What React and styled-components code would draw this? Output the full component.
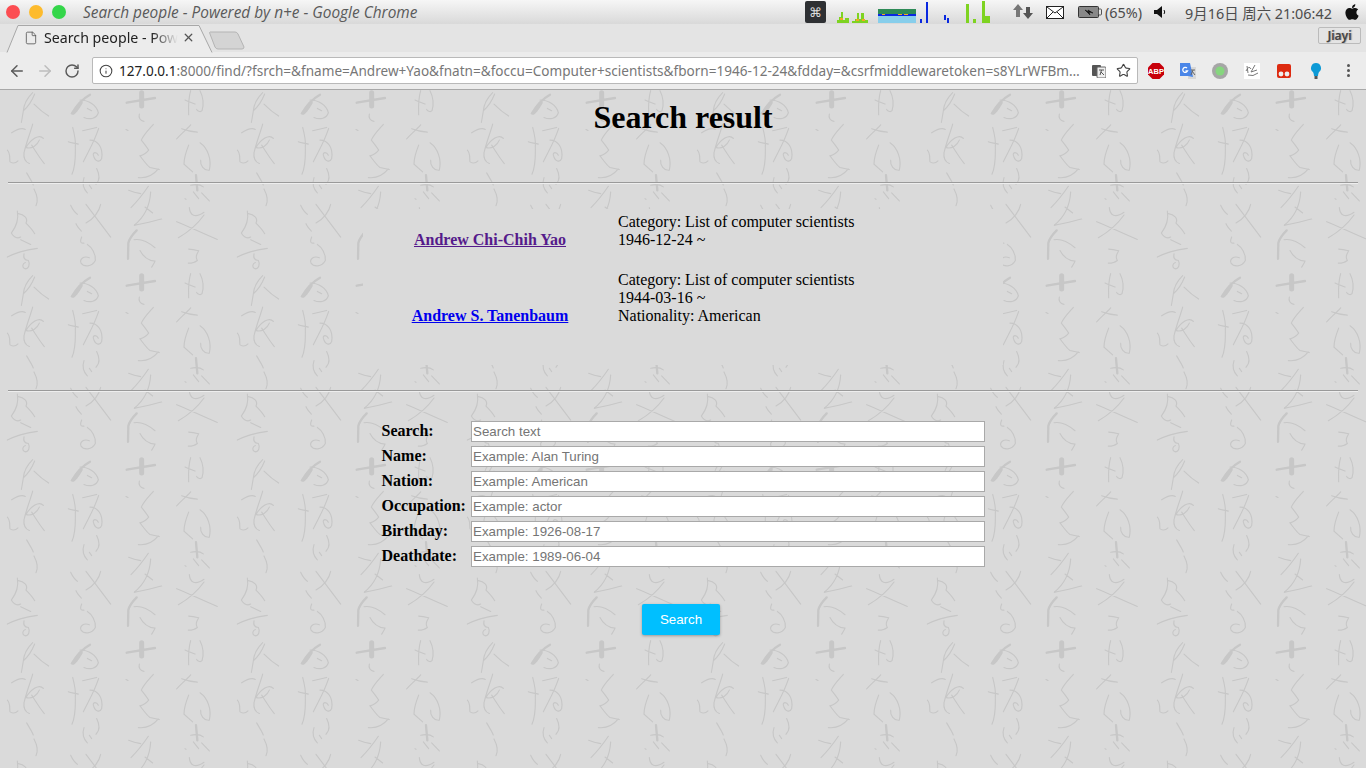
import React from "react";
import styled, { createGlobalStyle } from "styled-components";
import { ArrowLeft, ArrowRight, RotateCw, Star, X, File, Info } from "lucide-react";
import { FaApple } from "react-icons/fa";

// calligraphy strokes of the page wallpaper, in a 690x550 space (one tile is 230x183.5 on the page)
const thin = [
  "M98 8C88 18 72 40 70 62C82 52 96 32 104 12", "M70 62C68 75 66 88 64 97", "M102 42C115 55 130 68 146 78",
  "M35 128C50 118 65 112 76 118", "M98 102C92 125 78 160 72 188C70 205 76 215 88 220", "M130 145C118 130 92 148 78 172C95 178 112 165 118 150", "M95 165C108 185 120 205 133 220",
  "M22 180C32 190 28 205 30 215C38 220 48 218 54 212", "M80 248C88 262 95 272 100 284", "M102 296C112 315 116 330 108 346",
  "M52 362C56 385 48 410 34 428C42 442 52 445 62 440", "M55 370C72 372 85 385 78 398C88 408 98 418 104 430", "M62 448L92 462", "M22 500C50 485 85 478 112 474",
  "M72 490C70 500 72 510 85 510", "M85 510C92 522 85 535 75 535C66 532 66 520 76 516",
  "M240 30C265 30 290 45 295 68C290 85 270 90 252 82", "M262 55L275 62", "M218 112C224 135 228 150 226 170C226 200 228 225 216 252", "M205 155C215 160 225 158 235 162",
  "M248 122L290 112", "M296 115C285 150 270 175 250 215", "M270 150C295 150 310 175 305 205C300 218 285 215 280 195C278 185 290 185 295 195",
  "M290 235C300 255 298 272 288 282", "M252 262C246 280 250 295 262 308", "M268 285L275 295", "M212 345C218 358 222 365 232 372", "M258 342L332 440", "M302 342C298 362 282 385 258 398", "M228 400C232 410 238 415 244 422",
  "M245 440C240 452 240 460 252 458", "M262 462C275 470 288 490 286 510C275 530 252 530 243 518C238 505 252 495 268 502",
  "M418 72C415 82 420 92 432 94", "M378 118L384 121", "M460 103C445 120 430 135 424 150C432 160 440 170 446 180C438 190 428 195 420 197C430 210 440 225 450 232L478 238", "M415 262C445 265 462 252 475 236",
  "M445 288C430 310 410 335 393 352", "M386 300C398 305 410 308 422 310", "M452 305C450 340 440 375 402 405C430 400 460 392 485 386", "M435 350L458 368",
  "M402 448C420 445 445 455 465 472", "M420 480C430 500 445 510 465 512C462 520 458 525 455 530",
  "M572 2C565 25 565 50 566 74", "M555 30C565 35 575 38 585 42", "M600 2C610 20 612 45 606 62C600 68 592 62 590 58",
  "M530 146C545 130 560 118 572 104", "M545 116C560 122 575 125 592 126", "M566 165C558 185 552 205 552 222L578 245", "M600 158C625 175 635 210 628 240C612 242 600 225 602 210",
  "M572 285C585 282 598 280 610 290", "M605 308L628 332", "M555 325L558 327", "M580 305L596 325",
  "M568 352C570 375 585 385 612 366", "M530 394C570 410 610 430 652 447", "M612 374C590 405 565 425 535 442", "M566 476C575 476 585 478 596 481C590 492 585 500 592 510C585 516 575 518 565 518"
];
const thick = [
  "M270 14C250 25 228 48 216 70C222 75 235 55 245 38", "M380 38L465 24", "M410 420C398 432 388 445 385 458L384 505", "M588 255L592 300"
];
const tile = `<svg xmlns="http://www.w3.org/2000/svg" viewBox="0 0 690 550.5"><defs><filter id="s"><feGaussianBlur stdDeviation="0.9"/></filter></defs><g fill="none" stroke="#c7c7c7" stroke-linecap="round" filter="url(#s)"><path stroke-width="3.4" d="${thin.join("")}"/><path stroke-width="7" d="${thick.join("")}"/><path stroke-width="15" d="M425 8L425 48"/></g></svg>`;
const tileUrl = `data:image/svg+xml,${encodeURIComponent(tile)}`;

const results = [
  { name: "Andrew Chi-Chih Yao", visited: true, lines: ["Category: List of computer scientists", "1946-12-24 ~"] },
  { name: "Andrew S. Tanenbaum", visited: false, lines: ["Category: List of computer scientists", "1944-03-16 ~", "Nationality: American"] }
];

const fields = [
  { label: "Search:", hint: "Search text" },
  { label: "Name:", hint: "Example: Alan Turing" },
  { label: "Nation:", hint: "Example: American" },
  { label: "Occupation:", hint: "Example: actor" },
  { label: "Birthday:", hint: "Example: 1926-08-17" },
  { label: "Deathdate:", hint: "Example: 1989-06-04" }
];

function NetGraphs() {
  return (
    <svg width="158" height="24" viewBox="0 0 158 24">
      <path fill="#7ed321" d="M2 23V20H4V17H6V12H8V20H10V18H14V23ZM17 23V21H20V19H22V13H24V19H26V13H29V20H33V23ZM131 23V4H134V23ZM147 23V1H150V23ZM150 23V16H155V23ZM138 23V19H141V23Z" />
      <path fill="#f5a623" d="M5 18H8V20H5ZM21 19H24V21H21ZM27 19H30V21H27Z" />
      <rect x="43" y="9" width="38" height="5" fill="#2e8b57" />
      <rect x="43" y="14" width="38" height="2" fill="#0a28e0" />
      <rect x="43" y="16" width="38" height="7" fill="#87ceeb" />
      <path fill="#f5a623" d="M47 14H50V15H47ZM63 14H67V15H63ZM69 14H73V15H69Z" />
      <path fill="#0a28e0" d="M85 19H87V23H85ZM91 2H93V23H91ZM109 15H111V20H109ZM112 18H114V23H112Z" />
    </svg>
  );
}

function Battery() {
  return (
    <svg width="25" height="14" viewBox="0 0 25 14">
      <rect x="0.5" y="1.5" width="20" height="11" rx="1" fill="#888" stroke="#333" />
      <rect x="20.5" y="4" width="3" height="6" rx="1" fill="none" stroke="#555" />
      <path d="M7 5L11 7L10 5L15 8L11 7L12 10Z" fill="#111" stroke="#111" strokeWidth=".6" />
    </svg>
  );
}

function ExtensionIcons() {
  return (
    <ExtensionRow>
      <svg width="18" height="18" viewBox="0 0 18 18">
        <path d="M5.500 1H12.500L17 5.500V12.500L12.500 17H5.500L1 12.500V5.500Z" fill="#c8000a" />
        <Abp x="9" y="11.800" textAnchor="middle">ABP</Abp>
      </svg>
      <svg width="18" height="18" viewBox="0 0 18 18">
        <path d="M9 5H17V17H9Z" fill="#d8d8d8" />
        <path d="M1 1H11L14 15L9 14H1Z" fill="#4a86e8" />
        <path d="M12 8H16M14 8L12 13M13 9L16 13" stroke="#666" fill="none" />
        <path d="M8 6A2.500 2.500 0 1 0 8.500 9H6.500" stroke="#fff" strokeWidth="1.3" fill="none" />
      </svg>
      <svg width="18" height="18" viewBox="0 0 18 18">
        <circle cx="9" cy="9" r="8" fill="#a6a6a6" />
        <circle cx="9" cy="9" r="4.500" fill="#86d67e" />
      </svg>
      <svg width="18" height="18" viewBox="0 0 18 18">
        <rect width="16" height="16" x="1" y="1" fill="#fff" />
        <path d="M3 9Q6 3 8 7M12 3L8 10L14 8M5 13Q10 15 15 11M4 4L5 11" stroke="#777" fill="none" />
      </svg>
      <svg width="18" height="18" viewBox="0 0 18 18">
        <rect x="2" y="2" width="14" height="14" rx="2" fill="#dd2a10" />
        <circle cx="6" cy="12" r="2.400" fill="#eee" />
        <circle cx="12" cy="12" r="2.400" fill="#eee" />
      </svg>
      <svg width="18" height="18" viewBox="0 0 18 18">
        <path d="M9 1A5 5 0 0 1 12 10Q11 12 11 14H7Q7 12 6 10A5 5 0 0 1 9 1Z" fill="#0d9ad6" />
        <rect x="7.500" y="14" width="3" height="3" fill="#555" />
      </svg>
      <MenuDots>
        <i />
        <i />
        <i />
      </MenuDots>
    </ExtensionRow>
  );
}

export default function App() {
  return (
    <Screen>
      <GlobalStyle />
      <TitleBar>
        <Lights>
          <Light $color="#fc4d52" />
          <Light $color="#fdbb2d" />
          <Light $color="#34d64a" />
        </Lights>
        <WindowTitle>Search people - Powered by n+e - Google Chrome</WindowTitle>
        <Tray>
          <CmdKey>⌘</CmdKey>
          <TraySlot $gap={9}>
            <NetGraphs />
          </TraySlot>
          <TraySlot $gap={20}>
            <svg width="20" height="18" viewBox="0 0 20 18">
              <path d="M5 1L10 7H7V14H3V7H0Z" fill="#777" />
              <path d="M15 16L20 10H17V4H13V10H10Z" fill="#555" />
            </svg>
          </TraySlot>
          <TraySlot $gap={13}>
            <svg width="18" height="13" viewBox="0 0 18 13">
              <rect x=".5" y=".5" width="17" height="12" fill="#fff" stroke="#222" />
              <path d="M1 1L9 7L17 1M1 12L7 6M17 12L11 6" fill="none" stroke="#222" />
            </svg>
          </TraySlot>
          <TraySlot $gap={14}>
            <Battery />
          </TraySlot>
          <TrayText $gap={2}>(65%)</TrayText>
          <TraySlot $gap={12}>
            <svg width="12" height="12" viewBox="0 0 12 12">
              <path d="M0 4H3L8 0V12L3 8H0Z" fill="#111" />
              <path d="M10 4Q11.500 6 10 8" stroke="#111" fill="none" />
            </svg>
          </TraySlot>
          <TrayText $gap={19}>9月16日 周六 21:06:42</TrayText>
          <AppleSlot>
            <FaApple size={18} />
          </AppleSlot>
        </Tray>
      </TitleBar>

      <TabStrip>
        <Tab>
          <TabShape viewBox="0 0 213 28" preserveAspectRatio="none">
            <path d="M7 27.500L18 .5H199L212 27.500" fill="#ececec" stroke="#a8a8a8" />
          </TabShape>
          <File size={14} strokeWidth={1.4} color="#555" />
          <TabTitle>Search people - Pow</TabTitle>
          <X size={13} strokeWidth={2.4} color="#555" />
        </Tab>
        <NewTab viewBox="0 0 36 19">
          <path d="M1 1H26Q28 1 29 3L35 16Q35 18 33 18H9Q7 18 6 16L1 3Q0 1 1 1Z" fill="#d4d4d4" stroke="#b4b4b4" />
        </NewTab>
        <ProfileButton>Jiayi</ProfileButton>
      </TabStrip>

      <Toolbar>
        <NavIcons>
          <ArrowLeft size={18} color="#5a5a5a" strokeWidth={2} />
          <ArrowRight size={18} color="#bdbdbd" strokeWidth={2} />
          <RotateCw size={16} color="#5a5a5a" strokeWidth={2.2} />
        </NavIcons>
        <Omnibox>
          <Info size={14} color="#444" strokeWidth={1.8} />
          <Url>
            <UrlHost>127.0.0.1</UrlHost>:8000/find/?fsrch=&amp;fname=Andrew+Yao&amp;fnatn=&amp;foccu=Computer+scientists&amp;fborn=1946-12-24&amp;fdday=&amp;csrfmiddlewaretoken=s8YLrWFBm…
          </Url>
          <svg width="14" height="14" viewBox="0 0 14 14">
            <rect x="0" y="1" width="9" height="11" rx="1" fill="#555" />
            <rect x="5" y="3" width="9" height="11" rx="1" fill="#eee" stroke="#666" />
            <path d="M7 6H12M9.500 6L8 11M9 8L12 11" stroke="#555" fill="none" />
          </svg>
          <Star size={15} color="#444" strokeWidth={1.8} />
        </Omnibox>
        <ExtensionIcons />
      </Toolbar>

      <Page>
        <Heading>Search result</Heading>
        <Rule $top={46} />
        <ResultBox>
          {results.map(r => (
            <React.Fragment key={r.name}>
              <PersonLink href="#" $visited={r.visited}>
                {r.name}
              </PersonLink>
              <Details>
                {r.lines.map(l => (
                  <div key={l}>{l}</div>
                ))}
              </Details>
            </React.Fragment>
          ))}
        </ResultBox>
        <Rule $top={25} />
        <SearchForm>
          {fields.map(f => (
            <React.Fragment key={f.label}>
              <FieldLabel>{f.label}</FieldLabel>
              <FieldInput placeholder={f.hint} />
            </React.Fragment>
          ))}
        </SearchForm>
        <ButtonRow>
          <SearchButton type="button">Search</SearchButton>
        </ButtonRow>
      </Page>
    </Screen>
  );
}

const GlobalStyle = createGlobalStyle`
  html, body {
    margin: 0;
    padding: 0;
    height: 100%;
    overflow: hidden;
  }
`;

const Screen = styled.div`
  width: 1366px;
  height: 768px;
  display: flex;
  flex-direction: column;
  font-family: "Noto Sans", sans-serif;
`;

const TitleBar = styled.div`
  height: 24px;
  flex: none;
  display: flex;
  align-items: center;
  background: linear-gradient(#f6f6f6, #d9d9d9);
`;

const Lights = styled.div`
  display: flex;
  gap: 9px;
  padding-left: 6px;
`;

const Light = styled.span`
  width: 14px;
  height: 14px;
  border-radius: 50%;
  background: ${p => p.$color};
`;

const WindowTitle = styled.div`
  margin-left: 17px;
  width: 340px;
  font: italic 15.4px "Open Sans", sans-serif;
  color: #5a5a5a;
  white-space: nowrap;
`;

const Tray = styled.div`
  margin-left: 382px;
  display: flex;
  align-items: center;
  height: 24px;
`;

const CmdKey = styled.div`
  width: 21px;
  height: 22px;
  border-radius: 2px;
  background: #2e3033;
  color: #ddd;
  font-size: 13px;
  display: flex;
  align-items: center;
  justify-content: center;
`;

const TraySlot = styled.div`
  display: flex;
  align-items: center;
  margin-left: ${p => p.$gap}px;
`;

const TrayText = styled.div`
  margin-left: ${p => p.$gap}px;
  font: 14.4px "Noto Sans", "Noto Sans CJK SC", sans-serif;
  color: #4c4c4c;
  white-space: nowrap;
`;

const AppleSlot = styled.div`
  margin-left: 11px;
  display: flex;
  color: #111;
`;

const TabStrip = styled.div`
  height: 28px;
  flex: none;
  display: flex;
  align-items: flex-start;
  background: #e4e4e4;
  border-bottom: 1px solid #a8a8a8;
  box-sizing: content-box;
  margin-bottom: -1px;
`;

const Tab = styled.div`
  position: relative;
  width: 213px;
  height: 29px;
  margin-top: 1px;
  box-sizing: border-box;
  padding: 0 18px 4px 24px;
  display: flex;
  align-items: center;
  z-index: 1;
  svg:not(:first-child) {
    position: relative;
    flex: none;
  }
`;

const TabShape = styled.svg`
  position: absolute;
  left: 0;
  top: 0;
  width: 213px;
  height: 28px;
`;

const TabTitle = styled.div`
  position: relative;
  width: 138px;
  margin-left: 6px;
  font-size: 14.2px;
  color: #222;
  white-space: nowrap;
  overflow: hidden;
  mask-image: linear-gradient(to right, #000 78%, transparent 97%);
`;

const NewTab = styled.svg`
  width: 36px;
  height: 19px;
  flex: none;
  margin: 7px 0 0 -4px;
`;

const ProfileButton = styled.div`
  margin: 3px 5px 0 auto;
  width: 43px;
  height: 17px;
  border: 1px solid #bbb;
  border-radius: 2px;
  box-sizing: border-box;
  font: 600 12px/15px "Noto Sans", sans-serif;
  text-align: center;
  color: #444;
  text-shadow: 1px 0 1px #999;
`;

const Toolbar = styled.div`
  height: 38px;
  flex: none;
  display: flex;
  align-items: center;
  background: #ececec;
  border-bottom: 1px solid #a8a8a8;
  box-sizing: border-box;
  padding: 1px 0;
`;

const NavIcons = styled.div`
  width: 92px;
  flex: none;
  padding-left: 8px;
  box-sizing: border-box;
  display: flex;
  align-items: center;
  gap: 10px;
`;

const Omnibox = styled.div`
  width: 1046px;
  height: 27px;
  flex: none;
  box-sizing: border-box;
  background: #fff;
  border: 1px solid #b9b9b9;
  border-radius: 2px;
  display: flex;
  align-items: center;
  padding: 0 5px 0 6px;
  svg {
    flex: none;
  }
  svg:last-child {
    margin-left: 10px;
  }
`;

const Url = styled.div`
  width: 973px;
  margin-left: 6px;
  font-size: 13.57px;
  color: #777;
  white-space: nowrap;
  overflow: hidden;
`;

const UrlHost = styled.span`
  color: #222;
`;

const ExtensionRow = styled.div`
  flex: 1;
  display: flex;
  align-items: center;
  gap: 14px;
  padding-left: 9px;
  svg {
    width: 18px;
    height: 18px;
  }
`;

const Abp = styled.text`
  font: bold 7.5px "Liberation Sans", sans-serif;
  fill: #fff;
`;

const MenuDots = styled.div`
  display: flex;
  flex-direction: column;
  gap: 2px;
  margin-left: 8px;
  i {
    width: 3px;
    height: 3px;
    border-radius: 50%;
    background: #555;
  }
`;

const Page = styled.div`
  flex: 1;
  box-sizing: border-box;
  padding: 9px 8px 0;
  background: #dadada url("${tileUrl}") 0 0 / 230px 183.5px;
  font-family: "Liberation Serif", serif;
  font-size: 16px;
  color: #000;
`;

const Heading = styled.h1`
  margin: 0;
  font-size: 32px;
  line-height: 37px;
  text-align: center;
`;

const Rule = styled.hr`
  margin: ${p => p.$top}px 0 0;
  height: 0;
  border: 0;
  border-top: 1px solid #9a9a9a;
  border-bottom: 1px solid #eeeeee;
`;

const ResultBox = styled.div`
  width: 640px;
  margin: 25px auto 0;
  box-sizing: border-box;
  height: 156px;
  padding: 4px 0 0;
  background: #dadada;
  display: grid;
  grid-template-columns: 254px 1fr;
  grid-auto-rows: min-content;
  row-gap: 22px;
  line-height: 18px;
`;

const PersonLink = styled.a`
  align-self: end;
  justify-self: center;
  font-weight: bold;
  color: ${p => (p.$visited ? "#551a8b" : "#0000ee")};
`;

const Details = styled.div`
  padding-left: 1px;
`;

const SearchForm = styled.div`
  width: 604px;
  margin: 29px auto 0;
  display: grid;
  grid-template-columns: 90px 514px;
  grid-auto-rows: 21px;
  row-gap: 4px;
  align-items: center;
`;

const FieldLabel = styled.div`
  font-weight: bold;
  line-height: 18px;
  white-space: nowrap;
  padding-left: 0.5px;
  margin-bottom: 2px;
`;

const FieldInput = styled.input`
  width: 514px;
  height: 21px;
  box-sizing: border-box;
  margin: 0;
  padding: 1px;
  background: #fff;
  border: 1px solid #a9a9a9;
  font: 13.33px "Liberation Sans", sans-serif;
  &::placeholder {
    color: #757575;
    opacity: 1;
  }
`;

const ButtonRow = styled.div`
  margin-top: 37px;
  display: flex;
  justify-content: center;
  padding-right: 4px;
`;

const SearchButton = styled.button`
  width: 78px;
  height: 31px;
  border: 0;
  border-radius: 2px;
  background: #00bfff;
  color: #fff;
  font: 13.33px "Liberation Sans", sans-serif;
  box-shadow: 0 1px 3px rgba(0, 0, 0, 0.3);
`;
